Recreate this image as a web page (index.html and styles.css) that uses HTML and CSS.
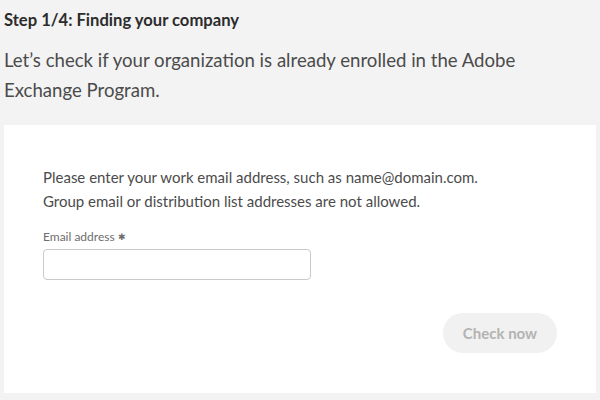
FILE: index.html
```html
<!DOCTYPE html>
<html lang="en">
<head>
<meta charset="utf-8">
<title>Finding your company</title>
<link rel="stylesheet" href="styles.css">
</head>
<body>
<main class="page">
  <header class="intro">
    <h1 class="step">Step 1/4: Finding your company</h1>
    <p class="lead">Let’s check if your organization is already enrolled in the Adobe Exchange Program.</p>
  </header>
  <section class="card">
    <p class="hint">Please enter your work email address, such as name@domain.com.<br>Group email or distribution list addresses are not allowed.</p>
    <div class="field">
      <label class="label" for="email">Email address <span class="req">✱</span></label>
      <input class="input" id="email" type="email">
    </div>
    <div class="actions">
      <button class="btn" type="button" disabled>Check now</button>
    </div>
  </section>
</main>
</body>
</html>
```
FILE: styles.css
```css
html, body {
  margin: 0;
  padding: 0;
}
body {
  background: #f3f3f3;
  font-family: Lato, "Open Sans", sans-serif;
  color: #4b4b4b;
  width: 600px;
  height: 400px;
  overflow: hidden;
}
.page {
  padding: 0 4px;
}
.intro {
  padding-top: 9px;
}
.step {
  margin: 0;
  font-size: 16.6px;
  line-height: 22px;
  font-weight: 700;
  color: #2c2c2c;
}
.lead {
  margin: 14px 0 0;
  font-size: 18.6px;
  line-height: 30px;
  color: #4b4b4b;
}
.card {
  margin-top: 20px;
  background: #fff;
  height: 268px;
  box-sizing: border-box;
  padding: 40px 39px 0;
  display: flex;
  flex-direction: column;
}
.hint {
  margin: 0;
  font-size: 15px;
  line-height: 24px;
  color: #4b4b4b;
}
.field {
  margin-top: 16px;
  display: flex;
  flex-direction: column;
}
.label {
  font-size: 12px;
  line-height: 16px;
  color: #6e6e6e;
  margin-bottom: 4px;
}
.req {
  font-size: 9px;
  vertical-align: 1px;
}
.input {
  width: 268px;
  height: 31px;
  box-sizing: border-box;
  border: 1px solid #cacaca;
  border-radius: 4px;
  background: #fff;
  margin: 0;
}
.actions {
  display: flex;
  justify-content: flex-end;
  margin-top: 33px;
}
.btn {
  width: 114px;
  height: 40px;
  border: none;
  border-radius: 20px;
  background: #f1f1f1;
  color: #b3b3b3;
  font-family: inherit;
  font-size: 15px;
  font-weight: 700;
  margin: 0;
}
```
